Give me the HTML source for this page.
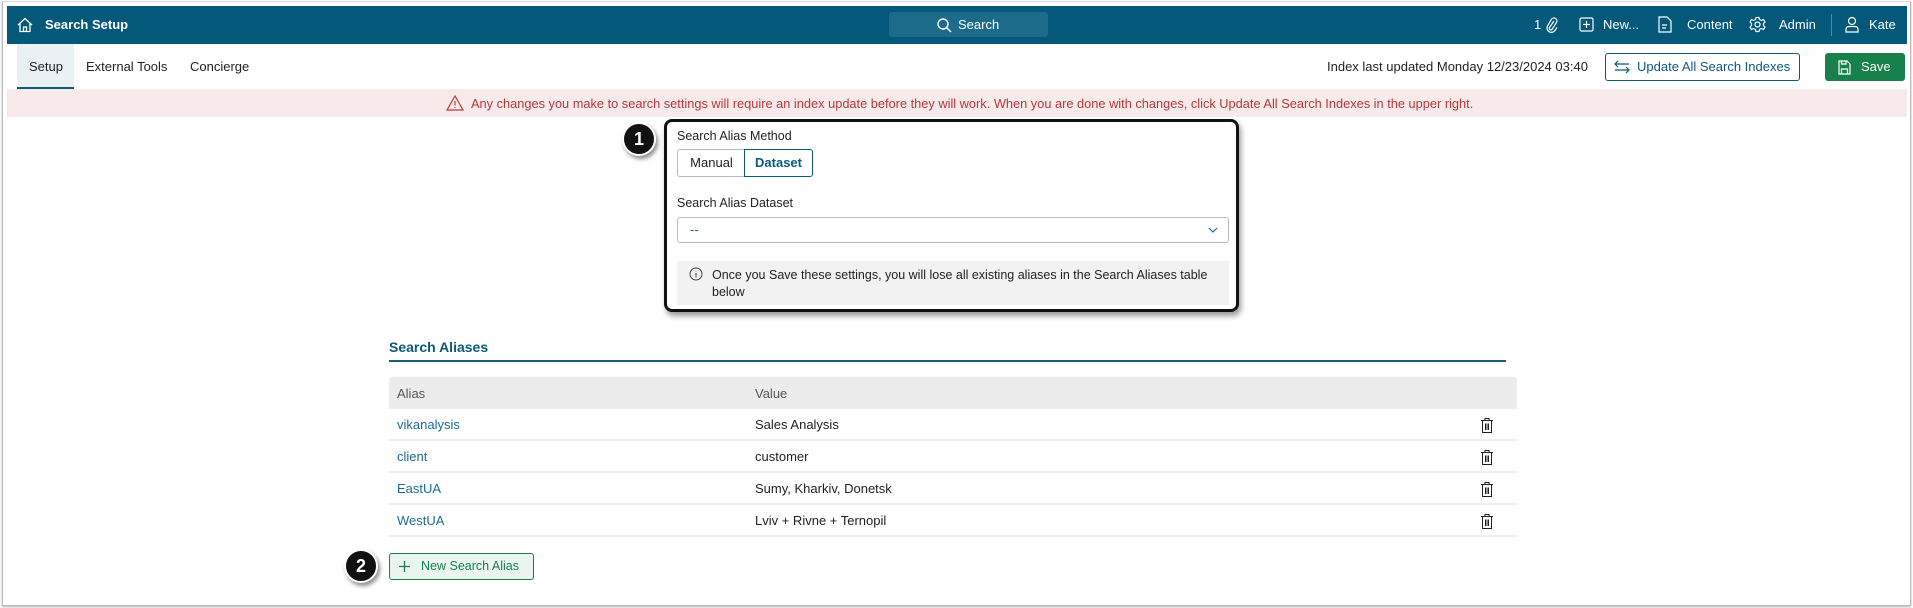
<!DOCTYPE html>
<html><head><meta charset="utf-8"><style>
*{box-sizing:border-box;margin:0;padding:0}
body{width:1913px;height:608px;background:#fff;font-family:"Liberation Sans",sans-serif;font-size:13px;color:#222;position:relative;overflow:hidden}
.abs{position:absolute}
.frame{left:2px;top:1px;width:1909px;height:605px;border:1px solid #bbb;border-top-color:#ddd;box-shadow:0 1px 2px rgba(0,0,0,.3)}
.bar{left:7px;top:6px;width:1900px;height:38px;background:#04587a;color:#fff}
.bar .t{top:11px;font-size:13px}
svg{position:absolute}
.tab{top:44px;height:45px;line-height:45px;font-size:13px}
.btn{border:1px solid #0b5a7a;border-radius:3px}
.badge{width:34px;height:34px;border-radius:50%;background:#111;color:#fff;font-weight:bold;font-size:18px;text-align:center;line-height:30px;box-shadow:2px 3px 4px rgba(0,0,0,.45);border:2px solid #fff}
.row{left:389px;width:1128px;height:32px;border-bottom:2px solid #eee;line-height:31px}
.row .a{position:absolute;left:8px;color:#1b6a93}
.row .v{position:absolute;left:366px;color:#222}
</style></head><body>
<div class="abs frame"></div>
<div class="abs bar">
 <svg style="left:10px;top:11px" width="16" height="16" viewBox="0 0 16 16" fill="none" stroke="#fff" stroke-width="1.3"><path d="M1 8 L8 1.5 L15 8 M3 6.5 V14.5 H13 V6.5 M6.5 14.5 V10 H9.5 V14.5"/></svg>
 <div class="abs t" style="left:38px;font-weight:bold">Search Setup</div>
 <div class="abs" style="left:882px;top:6px;width:159px;height:25px;background:#1c6b8b;border-radius:3px"></div>
 <svg style="left:930px;top:12px" width="15" height="15" viewBox="0 0 15 15" fill="none" stroke="#fff" stroke-width="1.4"><circle cx="6" cy="6" r="5"/><path d="M9.7 9.7 L14 14"/></svg>
 <div class="abs t" style="left:951px">Search</div>
 <div class="abs t" style="left:1527px">1</div>
 <svg style="left:1539px;top:11px" width="12" height="16" viewBox="0 0 12 16" fill="none" stroke="#fff" stroke-width="1.2"><path d="M8 4 L3.5 10.5 a1.6 1.6 0 0 0 2.6 1.8 L10.5 5.5 a3 3 0 0 0 -5 -3.3 L1.5 9 a4.4 4.4 0 0 0 7.3 4.8 L11 10.5"/></svg>
 <svg style="left:1572px;top:11px" width="15" height="15" viewBox="0 0 15 15" fill="none" stroke="#fff" stroke-width="1.2"><rect x="1" y="1" width="13" height="13" rx="1.5"/><path d="M7.5 4V11M4 7.5H11"/></svg>
 <div class="abs t" style="left:1596px">New...</div>
 <svg style="left:1651px;top:10px" width="14" height="17" viewBox="0 0 14 17" fill="none" stroke="#fff" stroke-width="1.2"><path d="M1 1H9L13 5V16H1Z M4 9H9 M4 12H8"/></svg>
 <div class="abs t" style="left:1680px">Content</div>
 <svg style="left:1742px;top:10px" width="17" height="17" viewBox="0 0 17 17" fill="none" stroke="#fff" stroke-width="1.2"><circle cx="8.5" cy="8.5" r="2.5"/><path d="M7 1.5H10L10.5 3.5L12.5 4.5L14.5 3.5L16 6L14.5 7.5V9.5L16 11L14.5 13.5L12.5 12.5L10.5 13.5L10 15.5H7L6.5 13.5L4.5 12.5L2.5 13.5L1 11L2.5 9.5V7.5L1 6L2.5 3.5L4.5 4.5L6.5 3.5Z"/></svg>
 <div class="abs t" style="left:1772px">Admin</div>
 <div class="abs" style="left:1824px;top:8px;width:1px;height:22px;background:#4d8aa4"></div>
 <svg style="left:1838px;top:10px" width="14" height="17" viewBox="0 0 14 17" fill="none" stroke="#fff" stroke-width="1.2"><circle cx="7" cy="5" r="3.5"/><path d="M1 16V13.5Q1 10.5 4 10.5H10Q13 10.5 13 13.5V16Z"/></svg>
 <div class="abs t" style="left:1862px">Kate</div>
</div>
<div class="abs" style="left:17px;top:44px;width:57px;height:45px;background:#e9f1f5;border-bottom:2px solid #0b5a7a"></div>
<div class="abs tab" style="left:29px">Setup</div>
<div class="abs tab" style="left:86px">External Tools</div>
<div class="abs tab" style="left:190px">Concierge</div>
<div class="abs" style="left:1327px;top:59px">Index last updated Monday 12/23/2024 03:40</div>
<div class="abs btn" style="left:1605px;top:53px;width:195px;height:28px"></div>
<svg style="left:1614px;top:60px" width="16" height="14" viewBox="0 0 16 14" fill="none" stroke="#0b5a7a" stroke-width="1.2"><path d="M15 4H1M4 1L1 4L4 7M1 10H15M12 7L15 10L12 13"/></svg>
<div class="abs" style="left:1637px;top:59px;color:#0b5a7a">Update All Search Indexes</div>
<div class="abs" style="left:1825px;top:53px;width:80px;height:28px;background:#18804a;border-radius:3px"></div>
<svg style="left:1838px;top:60px" width="13" height="15" viewBox="0 0 13 15" fill="none" stroke="#fff" stroke-width="1.2"><path d="M1 1H9L12 4V14H1Z M3.5 14V9H9.5V14 M3.5 1V4H8V1"/></svg>
<div class="abs" style="left:1861px;top:59px;color:#fff">Save</div>
<div class="abs" style="left:7px;top:89px;width:1900px;height:28px;background:#f6eaea"></div>
<svg style="left:446px;top:95px" width="18" height="16" viewBox="0 0 18 16" fill="none" stroke="#c0393b" stroke-width="1.2"><path d="M9 1L17 15H1Z M9 6V10.5 M9 12.2V13"/></svg>
<div class="abs" style="left:471px;top:96px;color:#b8383a;font-size:12.8px">Any changes you make to search settings will require an index update before they will work. When you are done with changes, click Update All Search Indexes in the upper right.</div>

<div class="abs" style="left:664px;top:119px;width:575px;height:193px;border:3px solid #111;border-radius:8px;box-shadow:2px 4px 6px rgba(0,0,0,.4)"></div>
<div class="abs badge" style="left:622px;top:122px">1</div>
<div class="abs" style="left:677px;top:129px;font-size:12.5px">Search Alias Method</div>
<div class="abs" style="left:677px;top:149px;width:68px;height:28px;border:1px solid #bbb;border-right:none;border-radius:3px 0 0 3px;line-height:26px;text-align:center">Manual</div>
<div class="abs btn" style="left:744px;top:149px;width:69px;height:28px;border-radius:0 3px 3px 0;line-height:26px;text-align:center;color:#0b5a7a;font-weight:bold">Dataset</div>
<div class="abs" style="left:677px;top:196px;font-size:12.5px">Search Alias Dataset</div>
<div class="abs" style="left:677px;top:217px;width:552px;height:26px;border:1px solid #bbb;border-radius:3px"></div>
<div class="abs" style="left:690px;top:222px;color:#1b6a93">--</div>
<svg style="left:1208px;top:226px" width="10" height="8" viewBox="0 0 10 8" fill="none" stroke="#1b6a93" stroke-width="1.2"><path d="M1 2L5 6L9 2"/></svg>
<div class="abs" style="left:677px;top:261px;width:552px;height:44px;background:#f2f2f2"></div>
<svg style="left:689px;top:267px" width="14" height="14" viewBox="0 0 14 14" fill="none" stroke="#444" stroke-width="1"><circle cx="7" cy="7" r="6"/><path d="M7 6V10.5M7 4V4.8"/></svg>
<div class="abs" style="left:712px;top:267px;font-size:12.5px;line-height:17px;width:515px">Once you Save these settings, you will lose all existing aliases in the Search Aliases table below</div>

<div class="abs" style="left:389px;top:339px;font-size:14px;font-weight:bold;color:#0b5a7a">Search Aliases</div>
<div class="abs" style="left:389px;top:360px;width:1117px;height:2px;background:#1a5a7a"></div>
<div class="abs" style="left:389px;top:377px;width:1128px;height:32px;background:#ececec;border-radius:3px 3px 0 0"></div>
<div class="abs" style="left:397px;top:386px;color:#555">Alias</div>
<div class="abs" style="left:755px;top:386px;color:#555">Value</div>
<div class="abs row" style="top:409px"><span class="a">vikanalysis</span><span class="v">Sales Analysis</span></div>
<div class="abs row" style="top:441px"><span class="a">client</span><span class="v">customer</span></div>
<div class="abs row" style="top:473px"><span class="a">EastUA</span><span class="v">Sumy, Kharkiv, Donetsk</span></div>
<div class="abs row" style="top:505px"><span class="a">WestUA</span><span class="v">Lviv + Rivne + Ternopil</span></div>
<svg style="left:1480px;top:417px" width="14" height="17" viewBox="0 0 14 17" fill="none" stroke="#222" stroke-width="1"><path d="M1 3.5H13M5 3.5V1.5H9V3.5M2.5 3.5V15.5H11.5V3.5M5.5 6.5V13M7 6.5V13M8.5 6.5V13"/></svg>
<svg style="left:1480px;top:449px" width="14" height="17" viewBox="0 0 14 17" fill="none" stroke="#222" stroke-width="1"><path d="M1 3.5H13M5 3.5V1.5H9V3.5M2.5 3.5V15.5H11.5V3.5M5.5 6.5V13M7 6.5V13M8.5 6.5V13"/></svg>
<svg style="left:1480px;top:481px" width="14" height="17" viewBox="0 0 14 17" fill="none" stroke="#222" stroke-width="1"><path d="M1 3.5H13M5 3.5V1.5H9V3.5M2.5 3.5V15.5H11.5V3.5M5.5 6.5V13M7 6.5V13M8.5 6.5V13"/></svg>
<svg style="left:1480px;top:513px" width="14" height="17" viewBox="0 0 14 17" fill="none" stroke="#222" stroke-width="1"><path d="M1 3.5H13M5 3.5V1.5H9V3.5M2.5 3.5V15.5H11.5V3.5M5.5 6.5V13M7 6.5V13M8.5 6.5V13"/></svg>

<div class="abs" style="left:389px;top:553px;width:145px;height:27px;border:1px solid #18804a;border-radius:3px;background:#eaf5ef"></div>
<svg style="left:398px;top:560px" width="13" height="13" viewBox="0 0 13 13" fill="none" stroke="#18804a" stroke-width="1.3"><path d="M6.5 1V12M1 6.5H12"/></svg>
<div class="abs" style="left:421px;top:559px;color:#18804a;font-size:12.5px">New Search Alias</div>
<div class="abs badge" style="left:344px;top:549px">2</div>
</body></html>
